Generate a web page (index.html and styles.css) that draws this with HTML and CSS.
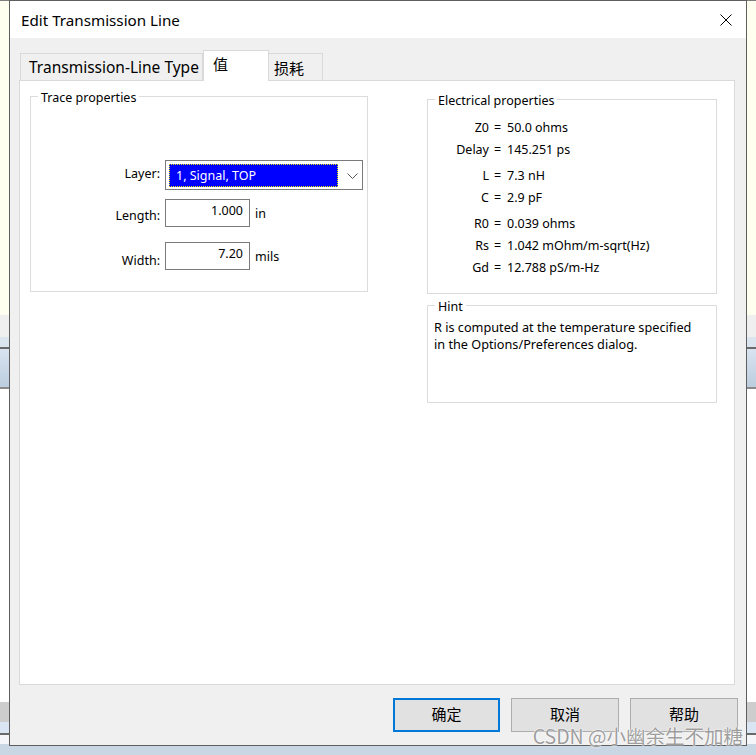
FILE: index.html
```html
<!DOCTYPE html>
<html>
<head>
<meta charset="utf-8">
<link rel="stylesheet" href="styles.css">
</head>
<body>
<div class="desktop">
  <div class="bd bd-line-top"></div>
  <div class="bd bd-yellow"></div>
  <div class="bd bd-grey"></div>
  <div class="bd bd-lblue"></div>
  <div class="bd bd-dark"></div>
  <div class="bd bd-grad"></div>
  <div class="bd bd-dark2"></div>
  <div class="bd bd-white"></div>
  <div class="bd bd-grey2"></div>
  <div class="bd bd-lblue2"></div>
  <div class="bd bd-dark"></div>
  <div class="bd bd-white2"></div>
  <div class="bd bd-bottom"></div>
</div>

<div class="dialog">
  <div class="titlebar">
    <span class="title">Edit Transmission Line</span>
    <svg class="close" width="12" height="12" viewBox="0 0 12 12"><path d="M0.5 0.5 L11.5 11.5 M11.5 0.5 L0.5 11.5" stroke="#000" stroke-width="1" fill="none"/></svg>
  </div>
  <div class="body">
    <div class="tabs">
      <div class="tab tab1">Transmission-Line Type</div>
      <div class="tab tab-active">值</div>
      <div class="tab tab3">损耗</div>
    </div>
    <div class="panel">
      <div class="group trace">
        <span class="legend">Trace properties</span>
        <div class="form">
          <div class="row row-layer">
            <span class="lbl">Layer:</span>
            <div class="select">
              <div class="sel">1, Signal, TOP</div>
              <svg class="chev" width="11" height="6" viewBox="0 0 11 6"><path d="M0.5 0.5 L5.5 5.5 L10.5 0.5" stroke="#555" stroke-width="1" fill="none"/></svg>
            </div>
          </div>
          <div class="row row-len">
            <span class="lbl">Length:</span>
            <div class="inp">1.000</div>
            <span class="unit">in</span>
          </div>
          <div class="row row-wid">
            <span class="lbl">Width:</span>
            <div class="inp">7.20</div>
            <span class="unit">mils</span>
          </div>
        </div>
      </div>
      <div class="rightcol">
        <div class="group elec">
          <span class="legend">Electrical properties</span>
          <div class="props">
            <div class="prop"><span class="pk">Z0</span><span class="eq">=</span><span class="pv">50.0 ohms</span></div>
            <div class="prop"><span class="pk">Delay</span><span class="eq">=</span><span class="pv">145.251 ps</span></div>
            <div class="prop sep"><span class="pk">L</span><span class="eq">=</span><span class="pv">7.3 nH</span></div>
            <div class="prop"><span class="pk">C</span><span class="eq">=</span><span class="pv">2.9 pF</span></div>
            <div class="prop sep"><span class="pk">R0</span><span class="eq">=</span><span class="pv">0.039 ohms</span></div>
            <div class="prop"><span class="pk">Rs</span><span class="eq">=</span><span class="pv">1.042 mOhm/m-sqrt(Hz)</span></div>
            <div class="prop"><span class="pk">Gd</span><span class="eq">=</span><span class="pv">12.788 pS/m-Hz</span></div>
          </div>
        </div>
        <div class="group hint">
          <span class="legend">Hint</span>
          <div class="hinttext">R is computed at the temperature specified<br>in the Options/Preferences dialog.</div>
        </div>
      </div>
    </div>
    <div class="buttons">
      <div class="btn btn-default">确定</div>
      <div class="btn btn-wide">取消</div>
      <div class="btn btn-wide">帮助</div>
    </div>
  </div>
</div>

<div class="watermark">CSDN @小幽余生不加糖</div>
</body>
</html>
```
FILE: styles.css
```css
html, body {
  margin: 0;
  padding: 0;
}
body {
  width: 756px;
  height: 755px;
  overflow: hidden;
  position: relative;
  font-family: "Noto Sans", "Noto Sans CJK SC", sans-serif;
  font-size: 12.5px;
  color: #000;
}

/* desktop behind the dialog */
.desktop {
  display: flex;
  flex-direction: column;
  height: 755px;
}
.bd { flex: none; }
.bd-line-top { height: 1px; background: #7d7d7d; }
.bd-yellow { height: 314px; background: #ffffef; }
.bd-grey { height: 22px; background: #efefef; }
.bd-lblue { height: 10px; background: #dbe5f0; }
.bd-dark { height: 2px; background: #6a6a6a; }
.bd-grad { height: 38px; background: linear-gradient(#d8e3ef, #bccddf); }
.bd-dark2 { height: 2px; background: #8a8a8a; }
.bd-white { height: 313px; background: #ffffff; }
.bd-grey2 { height: 20px; background: #cdcdcd; }
.bd-lblue2 { height: 11px; background: #d9e5f2; }
.bd-white2 { height: 9px; background: #f4f6fa; }
.bd-bottom { flex: 1; background: #c9d6e4; }

/* dialog window */
.dialog {
  position: absolute;
  left: 9px;
  top: 0;
  width: 736px;
  height: 744px;
  border: 1px solid #5e5e5e;
  background: #f0f0f0;
  display: flex;
  flex-direction: column;
}
.titlebar {
  height: 37px;
  flex: none;
  background: #fff;
  display: flex;
  align-items: center;
  justify-content: space-between;
  padding: 0 14px 0 11px;
  font-size: 15.2px;
}
.title { position: relative; top: 0px; }
.close { display: block; }

.body {
  flex: 1;
  display: flex;
  flex-direction: column;
  padding: 12px 8px 13px 9px;
}

.tabs {
  display: flex;
  align-items: flex-end;
  height: 31px;
  padding-left: 1px;
  margin-bottom: -1px;
  position: relative;
  z-index: 1;
  flex: none;
}
.tab {
  box-sizing: border-box;
  height: 27px;
  margin-bottom: 1px;
  border: 1px solid #d9d9d9;
  border-bottom: none;
  background: #f0f0f0;
  font-size: 15px;
  display: flex;
  align-items: center;
  white-space: nowrap;
}
.tab1 { width: 183px; padding-left: 8px; font-size: 15.5px; }
.tab-active {
  width: 66px;
  height: 31px;
  margin-bottom: 0;
  background: #fff;
  padding-left: 9px;
  align-items: flex-start;
  padding-top: 2px;
}
.tab3 { width: 54px; border-left: none; padding-left: 5px; }

.panel {
  flex: 1;
  background: #fff;
  border: 1px solid #d9d9d9;
  margin-right: 3px;
  display: flex;
  align-items: flex-start;
  padding: 15px 0 0 10px;
}

.group {
  position: relative;
  box-sizing: border-box;
  border: 1px solid #dcdcdc;
}
.legend {
  position: absolute;
  top: -7px;
  left: 7px;
  background: #fff;
  padding: 0 3px;
  line-height: 16px;
  white-space: nowrap;
}

.trace {
  width: 338px;
  height: 196px;
}
.form {
  display: flex;
  flex-direction: column;
  padding-top: 63px;
}
.row {
  display: flex;
  align-items: center;
}
.row-len { margin-top: 9px; }
.row-wid { margin-top: 15px; }
.lbl {
  width: 129px;
  margin-right: 5px;
  text-align: right;
}
.row-layer .lbl { padding-bottom: 3px; }
.row-len .lbl { padding-top: 4px; }
.row-wid .lbl { padding-top: 9px; }
.select {
  box-sizing: border-box;
  width: 198px;
  height: 30px;
  border: 1px solid #7a7a7a;
  background: #fff;
  display: flex;
  align-items: flex-start;
  padding: 3px 0 0 3px;
}
.sel {
  box-sizing: border-box;
  width: 169px;
  height: 23px;
  background: #0000ff;
  border: 1px dotted #e8e800;
  color: #fff;
  padding-left: 6px;
  display: flex;
  align-items: center;
}
.chev {
  margin: 9px 0 0 9px;
  display: block;
}
.inp {
  box-sizing: border-box;
  width: 85px;
  height: 28px;
  border: 1px solid #7a7a7a;
  text-align: right;
  padding-right: 6px;
  line-height: 22px;
}
.unit { margin-left: 5px; }

.rightcol {
  margin-left: 59px;
  margin-top: 3px;
  display: flex;
  flex-direction: column;
}
.elec {
  width: 290px;
  height: 195px;
}
.props {
  padding-top: 17px;
  display: flex;
  flex-direction: column;
}
.prop {
  display: flex;
  line-height: 22px;
  height: 22px;
}
.prop.sep { margin-top: 4px; }
.pk { width: 61px; text-align: right; }
.eq { width: 17px; text-align: center; }
.pv { margin-left: 1px; white-space: nowrap; }

.hint {
  width: 290px;
  height: 98px;
  margin-top: 11px;
}
.hinttext {
  padding: 13px 0 0 6px;
  line-height: 17px;
  font-size: 12.7px;
}

.buttons {
  flex: none;
  display: flex;
  justify-content: flex-end;
  gap: 11px;
  margin-top: 13px;
}
.btn {
  box-sizing: border-box;
  width: 108px;
  height: 34px;
  border: 1px solid #adadad;
  background: #e1e1e1;
  font-size: 15px;
  display: flex;
  align-items: center;
  justify-content: center;
  padding-bottom: 3px;
}
.btn-default {
  width: 107px;
  border: 2px solid #0078d7;
}

.watermark {
  position: absolute;
  right: 13px;
  top: 727px;
  font-family: "Noto Sans CJK SC", sans-serif;
  font-size: 19.5px;
  line-height: 18px;
  color: rgba(140, 140, 140, 0.85);
  text-shadow: 0 0 2px #fff, 0 0 1px #fff;
  white-space: nowrap;
}
```
